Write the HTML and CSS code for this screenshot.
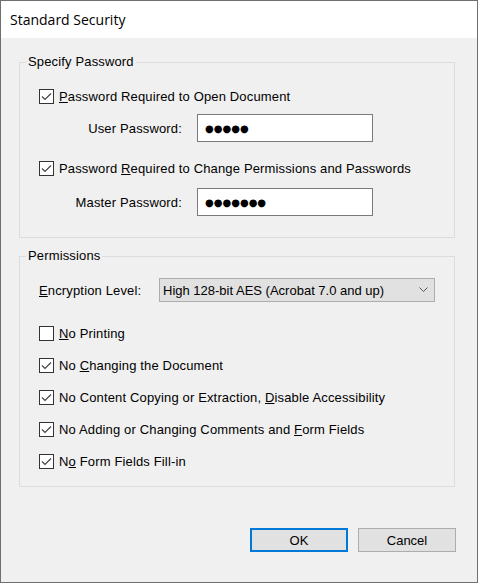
FILE: index.html
```html
<!DOCTYPE html>
<html>
<head>
<meta charset="utf-8">
<link rel="stylesheet" href="styles.css">
</head>
<body>
<div class="window">
  <div class="titlebar">Standard Security</div>
  <div class="content">
    <fieldset class="group group-pass">
      <legend>Specify Password</legend>
      <div class="check-row row-open">
        <svg class="box" width="15" height="15" viewBox="0 0 15 15"><rect x="0.5" y="0.5" width="14" height="14" fill="#fff" stroke="#333"/><polyline points="3,7.5 6,10.5 12,4.5" fill="none" stroke="#444" stroke-width="1.2"/></svg>
        <span><u>P</u>assword Required to Open Document</span>
      </div>
      <div class="field-row row-user">
        <span class="field-label">User Password:</span>
        <div class="textbox"><span class="dots">●●●●●</span></div>
      </div>
      <div class="check-row row-change">
        <svg class="box" width="15" height="15" viewBox="0 0 15 15"><rect x="0.5" y="0.5" width="14" height="14" fill="#fff" stroke="#333"/><polyline points="3,7.5 6,10.5 12,4.5" fill="none" stroke="#444" stroke-width="1.2"/></svg>
        <span>Password <u>R</u>equired to Change Permissions and Passwords</span>
      </div>
      <div class="field-row row-master">
        <span class="field-label">Master Password:</span>
        <div class="textbox"><span class="dots">●●●●●●●</span></div>
      </div>
    </fieldset>

    <fieldset class="group group-perm">
      <legend>Permissions</legend>
      <div class="select-row">
        <span class="select-label"><u>E</u>ncryption Level:</span>
        <div class="select">
          <span class="select-text">High 128-bit AES (Acrobat 7.0 and up)</span>
          <svg class="chev" width="10" height="6" viewBox="0 0 10 6"><polyline points="0.5,0.5 4.5,4.5 8.5,0.5" fill="none" stroke="#555" stroke-width="1"/></svg>
        </div>
      </div>
      <div class="check-list">
        <div class="check-row">
          <svg class="box" width="15" height="15" viewBox="0 0 15 15"><rect x="0.5" y="0.5" width="14" height="14" fill="#fff" stroke="#333"/></svg>
          <span><u>N</u>o Printing</span>
        </div>
        <div class="check-row">
          <svg class="box" width="15" height="15" viewBox="0 0 15 15"><rect x="0.5" y="0.5" width="14" height="14" fill="#fff" stroke="#333"/><polyline points="3,7.5 6,10.5 12,4.5" fill="none" stroke="#444" stroke-width="1.2"/></svg>
          <span>No <u>C</u>hanging the Document</span>
        </div>
        <div class="check-row">
          <svg class="box" width="15" height="15" viewBox="0 0 15 15"><rect x="0.5" y="0.5" width="14" height="14" fill="#fff" stroke="#333"/><polyline points="3,7.5 6,10.5 12,4.5" fill="none" stroke="#444" stroke-width="1.2"/></svg>
          <span>No Content Copying or Extraction, <u>D</u>isable Accessibility</span>
        </div>
        <div class="check-row">
          <svg class="box" width="15" height="15" viewBox="0 0 15 15"><rect x="0.5" y="0.5" width="14" height="14" fill="#fff" stroke="#333"/><polyline points="3,7.5 6,10.5 12,4.5" fill="none" stroke="#444" stroke-width="1.2"/></svg>
          <span>No Adding or Changing Comments and <u>F</u>orm Fields</span>
        </div>
        <div class="check-row">
          <svg class="box" width="15" height="15" viewBox="0 0 15 15"><rect x="0.5" y="0.5" width="14" height="14" fill="#fff" stroke="#333"/><polyline points="3,7.5 6,10.5 12,4.5" fill="none" stroke="#444" stroke-width="1.2"/></svg>
          <span>N<u>o</u> Form Fields Fill-in</span>
        </div>
      </div>
    </fieldset>

    <div class="buttons">
      <button class="btn btn-default">OK</button>
      <button class="btn">Cancel</button>
    </div>
  </div>
</div>
</body>
</html>
```

FILE: styles.css
```css
* { box-sizing: border-box; }
html, body { margin: 0; padding: 0; }
body {
  width: 478px;
  height: 583px;
  font-family: "Liberation Sans", Arial, sans-serif;
  font-size: 13px;
  letter-spacing: 0.15px;
  color: #000;
}
.window {
  width: 478px;
  height: 583px;
  border: 1px solid #6f6f6f;
  display: flex;
  flex-direction: column;
  background: #f0f0f0;
}
.titlebar {
  height: 37px;
  flex: none;
  background: #fff;
  padding-left: 9px;
  line-height: 37px;
  font-size: 14px;
  letter-spacing: 0;
  font-family: "Open Sans", "Liberation Sans", sans-serif;
}
.content {
  flex: 1;
  padding: 0 21px 0 18px;
  display: flex;
  flex-direction: column;
}
.group {
  margin: 0 1px 0 0;
  border: 1px solid #dcdcdc;
  padding: 0 19px;
  min-width: 0;
}
.group legend {
  padding: 0 2px;
  margin-left: -13px;
  line-height: 16px;
}
.group-pass { margin-top: 16px; padding-top: 16px; padding-bottom: 21px; }
.group-perm { margin-top: 10px; padding-top: 14px; padding-bottom: 15px; }

.check-row {
  display: flex;
  align-items: center;
  gap: 5px;
  height: 20px;
}
.box { flex: none; display: block; }
.field-row {
  display: flex;
  align-items: center;
}
.row-user { margin-top: 8px; }
.row-change { margin-top: 16px; }
.row-master { margin-top: 10px; }
.field-label {
  width: 143px;
  text-align: right;
  margin-right: 15px;
}
.textbox {
  width: 176px;
  height: 28px;
  background: #fff;
  border: 1px solid #7a7a7a;
  padding: 5px 0 0 7px;
}
.dots {
  font-family: "DejaVu Sans", sans-serif;
  font-size: 10px;
  letter-spacing: 0;
  line-height: 14px;
}
.select-row {
  display: flex;
  align-items: center;
}
.select-label { width: 120px; }
.select {
  width: 276px;
  height: 24px;
  background: #e1e1e1;
  border: 1px solid #adadad;
  display: flex;
  align-items: center;
  justify-content: space-between;
  padding: 0 5px 0 3px;
}
.select-text { letter-spacing: 0; }
.chev { display: block; }
.check-list {
  margin-top: 21px;
  display: flex;
  flex-direction: column;
  gap: 12px;
}
.buttons {
  margin-top: 41px;
  display: flex;
  justify-content: flex-end;
  gap: 10px;
}
.btn {
  width: 98px;
  height: 24px;
  background: #e1e1e1;
  border: 1px solid #adadad;
  font-family: "Liberation Sans", Arial, sans-serif;
  font-size: 13px;
  color: #000;
  padding: 0;
}
.btn-default { border: 2px solid #0078d7; }
```
